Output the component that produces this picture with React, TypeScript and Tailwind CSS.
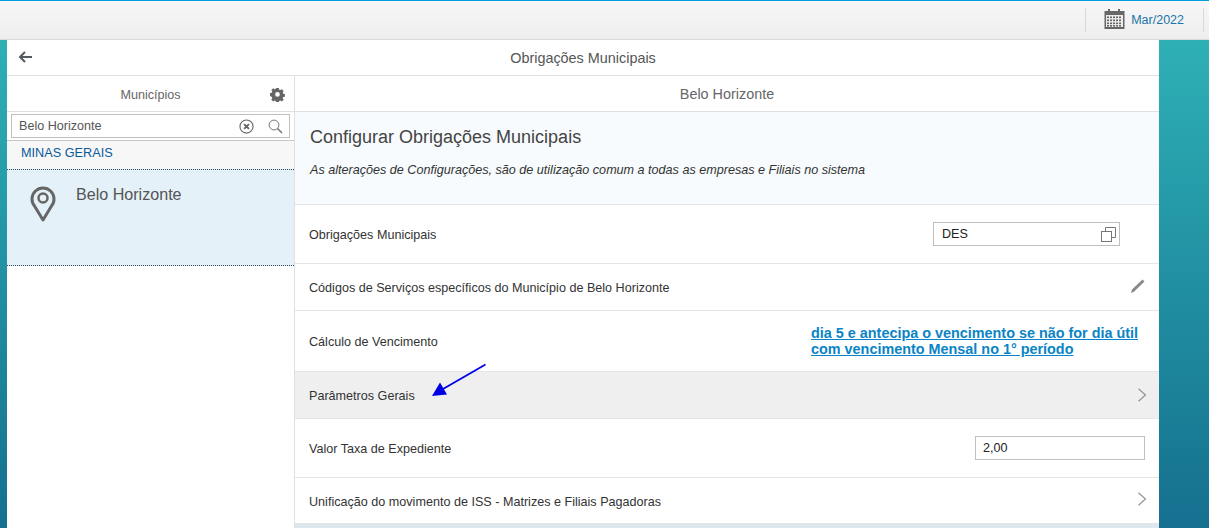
import React from "react";

function Row({ className = "", labelClass = "mt-[2px]", label, children }: { className?: string; labelClass?: string; label: string; children?: React.ReactNode }) {
  return (
    <div className={`flex shrink-0 items-center justify-between border-b border-[#e5e5e5] pl-[14px] text-[12.6px] text-[#333333] ${className}`}>
      <span className={labelClass}>{label}</span>
      {children}
    </div>
  );
}

function Chevron({ className = "" }: { className?: string }) {
  return (
    <svg width="10" height="16" viewBox="0 0 10 16" fill="none" className={`mr-[12px] ${className}`}>
      <path d="M1.5 1.7 L8.5 8 L1.5 14.3" stroke="#8f959b" strokeWidth="1.2" />
    </svg>
  );
}

export default function App() {
  return (
    <div className="relative flex h-[528px] w-[1209px] flex-col overflow-hidden font-['Liberation_Sans',Arial,sans-serif]">
      <header className="flex h-[40px] shrink-0 items-center justify-end border-t border-b border-t-[#009de0] border-b-[#d9d9d9] bg-gradient-to-b from-[#f7f7f7] to-[#eeeeee]">
        <div className="mr-[5px] flex h-[24px] items-center border-l border-[#d8d8d8] pl-[18px]">
          <svg width="21" height="20" viewBox="0 0 21 20" className="mb-[2px] mr-[6px]">
            <rect x="0.5" y="2" width="20" height="18" fill="#666666" />
            <rect x="4" y="0" width="2" height="4" fill="#666666" />
            <rect x="14" y="0" width="2" height="4" fill="#666666" />
            <rect x="2" y="6" width="17" height="12" fill="#ececec" />
            {[7.5, 10.5, 13.5, 16].map((y) =>
              [3, 6, 9, 12, 15].map((x) => <rect key={`${x}-${y}`} x={x} y={y} width="2" height="1.6" fill="#666666" />)
            )}
          </svg>
          <span className="mr-[19px] text-[12.5px] text-[#1a75a8]">Mar/2022</span>
          <div className="h-[24px] w-px bg-[#d8d8d8]" />
        </div>
      </header>

      <div className="flex min-h-0 flex-1 bg-gradient-to-b from-[#2eb0b5] to-[#15708f] pl-[7px] pr-[50px]">
        <div className="flex min-w-0 flex-1 flex-col bg-white">
          <div className="relative flex h-[36px] shrink-0 items-center justify-center border-b border-[#e0e0e0] pt-[2px] text-[14.4px] text-[#555555]">
            <svg width="16" height="12" viewBox="0 0 16 12" className="absolute left-[11px] top-[11px]" fill="none">
              <path d="M14 6 H2 M7 1 L2 6 L7 11" stroke="#555a60" strokeWidth="2" />
            </svg>
            Obrigações Municipais
          </div>

          <div className="flex min-h-0 flex-1">
            <aside className="flex w-[288px] shrink-0 flex-col border-r border-[#e0e0e0]">
              <div className="relative flex h-[36px] shrink-0 items-center justify-center border-b border-[#e0e0e0] pt-[3px] text-[12.6px] text-[#666666]">
                Municípios
                <svg width="15" height="15" viewBox="0 0 16 16" className="absolute left-[263px] top-[11px]">
                  <path
                    fill="#666666"
                    fillRule="evenodd"
                    d="M6.6 1h2.8l.4 1.8 1.2.5 1.6-1 2 2-1 1.6.5 1.2 1.8.4v2.8l-1.8.4-.5 1.2 1 1.6-2 2-1.6-1-1.2.5-.4 1.8H6.6l-.4-1.8-1.2-.5-1.6 1-2-2 1-1.6-.5-1.2L0 9.3V6.5l1.9-.4.5-1.2-1-1.6 2-2 1.6 1 1.2-.5zM8 5.4a2.5 2.5 0 1 0 0 5 2.5 2.5 0 0 0 0-5z"
                  />
                </svg>
              </div>
              <div className="flex h-[29px] shrink-0 items-center border-b border-[#c8c8c8] px-[4px]">
                <div className="flex h-[24px] w-[280px] items-center justify-between border border-[#bfbfbf] pl-[7px] pr-[6px] text-[12.6px] text-[#555555]">
                  Belo Horizonte
                  <span className="flex items-center gap-[14px]">
                    <svg width="15" height="15" viewBox="0 0 16 16" fill="none">
                      <circle cx="8" cy="8" r="7" stroke="#666666" strokeWidth="1.2" />
                      <path d="M5.4 5.4 L10.6 10.6 M10.6 5.4 L5.4 10.6" stroke="#666666" strokeWidth="2" />
                    </svg>
                    <svg width="15" height="15" viewBox="0 0 15 15" fill="none">
                      <circle cx="6" cy="6" r="4.9" stroke="#777777" />
                      <path d="M9.5 9.5 L14 14" stroke="#777777" strokeWidth="1.6" />
                    </svg>
                  </span>
                </div>
              </div>
              <div className="flex h-[28px] shrink-0 items-center bg-[#f7f7f7] pb-[2px] pl-[14px] text-[12.7px] text-[#0a5a9c]">MINAS GERAIS</div>
              <div className="flex h-[97px] shrink-0 border-y border-dotted border-y-[#2b4a5c] bg-[#e4f1f9]">
                <svg width="26" height="37" viewBox="0 0 26 37" className="ml-[23px] mt-[16px]" fill="none">
                  <path d="M13 34 L4.5 20 A11 11 0 1 1 21.5 20 Z" stroke="#666666" strokeWidth="3" strokeLinejoin="round" />
                  <circle cx="13" cy="12" r="4.5" stroke="#666666" strokeWidth="2.5" />
                </svg>
                <span className="ml-[20px] mt-[15px] text-[16.1px] leading-[19px] text-[#555555]">Belo Horizonte</span>
              </div>
            </aside>

            <main className="flex min-w-0 flex-1 flex-col">
              <div className="flex h-[36px] shrink-0 items-center justify-center border-b border-[#e0e0e0] pt-[2px] text-[14.4px] text-[#666666]">Belo Horizonte</div>
              <div className="h-[93px] shrink-0 border-b border-[#e5e5e5] bg-[#f7fbfd] pl-[15px]">
                <h1 className="mt-[15px] text-[18px] leading-[21px] text-[#444444]">Configurar Obrigações Municipais</h1>
                <p className="mt-[15px] text-[12.6px] italic leading-[14px] text-[#333333]">
                  As alterações de Configurações, são de utilização comum a todas as empresas e Filiais no sistema
                </p>
              </div>
              <Row className="h-[59px]" label="Obrigações Municipais">
                <div className="mr-[39px] flex h-[24px] w-[187px] items-center justify-between border border-[#bfbfbf] pl-[8px] pr-[3px] text-[12.6px] text-[#222222]">
                  DES
                  <svg width="15" height="15" viewBox="0 0 15 15" fill="none" stroke="#777777">
                    <rect x="0.5" y="4.5" width="10" height="10" />
                    <path d="M4.5 4.5 V0.5 H14.5 V10.5 H10.5" />
                  </svg>
                </div>
              </Row>
              <Row className="h-[47px]" label="Códigos de Serviços específicos do Município de Belo Horizonte">
                <svg width="16" height="16" viewBox="0 0 16 16" className="mb-[2px] mr-[13px]" fill="none">
                  <path d="M1 15 L2 11.5 L12.5 1.5 L14.5 3.5 L4 13.8 Z" fill="#8a8a8a" />
                </svg>
              </Row>
              <Row className="h-[61px]" label="Cálculo de Vencimento">
                <a className="mr-[20px] w-[328px] text-[14.4px] font-bold leading-[16px] text-[#0a84c6] underline">
                  dia 5 e antecipa o vencimento se não for dia útil com vencimento Mensal no 1° período
                </a>
              </Row>
              <Row className="h-[47px] bg-[#efefef]" label="Parâmetros Gerais">
                <Chevron />
              </Row>
              <Row className="h-[59px]" label="Valor Taxa de Expediente">
                <div className="mr-[14px] flex h-[24px] w-[170px] items-center border border-[#bfbfbf] pl-[7px] text-[12.6px] text-[#222222]">2,00</div>
              </Row>
              <Row className="h-[46px]" labelClass="mt-[4px]" label="Unificação do movimento de ISS - Matrizes e Filiais Pagadoras">
                <Chevron className="mb-[3px]" />
              </Row>
              <div className="flex-1 bg-[#dde8ee]" />
            </main>
          </div>
        </div>
      </div>

      <svg width="60" height="42" viewBox="0 0 60 42" className="absolute left-[430px] top-[362px]" fill="none">
        <path d="M55.5 2.5 L13 27" stroke="#0000e6" strokeWidth="1.8" />
        <path d="M2 34 L17 32.5 L10 20.5 Z" fill="#0000e6" />
      </svg>
    </div>
  );
}
